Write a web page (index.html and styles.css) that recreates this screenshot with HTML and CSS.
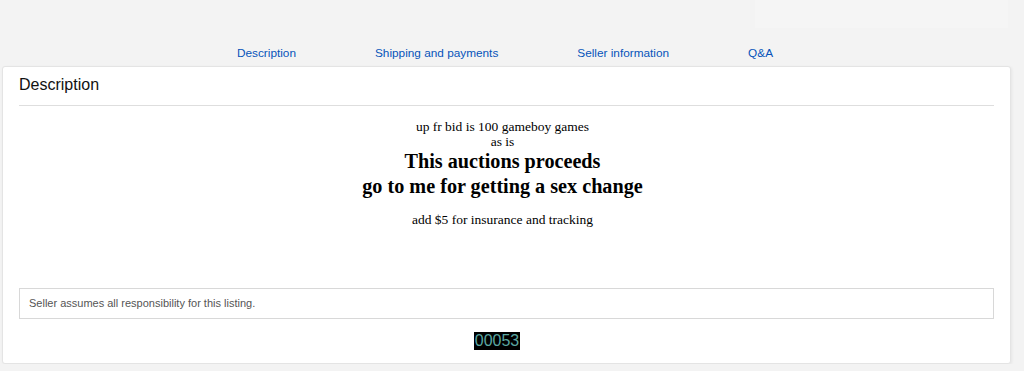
FILE: index.html
```html
<!DOCTYPE html>
<html lang="en">
<head>
    <meta charset="utf-8">
    <link rel="stylesheet" href="styles.css">
</head>
<body>
    <div class="topbar"><div class="ghost"></div></div>
    <main class="page">
        <ul class="tabs">
            <li><a href="#desc">Description</a></li>
            <li><a href="#ship">Shipping and payments</a></li>
            <li><a href="#seller">Seller information</a></li>
            <li><a href="#qa">Q&amp;A</a></li>
        </ul>
        <section class="card" id="desc">
            <h2 class="card-title">Description</h2>
            <div class="listing">
                <p class="small">up fr bid is 100 gameboy games<br>as is</p>
                <p class="big">This auctions proceeds<br>go to me for getting a sex change</p>
                <p class="small">add $5 for insurance and tracking</p>
            </div>
            <div class="notice">Seller assumes all responsibility for this listing.</div>
            <div class="counter"><span>00053</span></div>
        </section>
    </main>
</body>
</html>
```
FILE: styles.css
```css
html, body { margin: 0; padding: 0; }
body { background: #f3f3f3; font-family: "Liberation Sans", Arial, sans-serif; color: #111; }

.topbar { height: 30px; display: flex; justify-content: flex-end; padding-right: 16px; }
.topbar .ghost { width: 253px; height: 28px; background: #f5f5f5; }

.page { padding: 0 13px 0 2px; }

.tabs { list-style: none; margin: 16px 0 0; padding: 0 3px 0 0; display: flex; justify-content: center; gap: 79px; height: 20px; font-size: 11.8px; line-height: 14px; }
.tabs a { color: #0654ba; text-decoration: none; }

.card { background: #fff; border: 1px solid #e4e4e4; border-radius: 3px; box-shadow: 1px 1px 3px rgba(0,0,0,0.06); padding: 0 16px 13px; }
.card-title { margin: 0; padding: 9px 0 11px; font-size: 16px; font-weight: normal; line-height: 18px; color: #111; border-bottom: 1px solid #dedede; }

.listing { font-family: "Liberation Serif", "Times New Roman", serif; text-align: center; color: #000; padding: 13px 8px 61px 0; }
.listing p { margin: 0; }
.listing .small { font-size: 13.5px; line-height: 15px; }
.listing .big { font-size: 20.2px; font-weight: bold; line-height: 25px; margin: 0 0 13px; }

.notice { border: 1px solid #d8d8d8; padding: 8px 9px 9px; font-size: 11px; line-height: 12px; color: #555; }

.counter { text-align: center; margin-top: 13px; padding-right: 19px; }
.counter span { display: inline-block; background: #000; color: #5aa6a0; font-size: 16px; line-height: 18px; padding: 0 1px; }
```
